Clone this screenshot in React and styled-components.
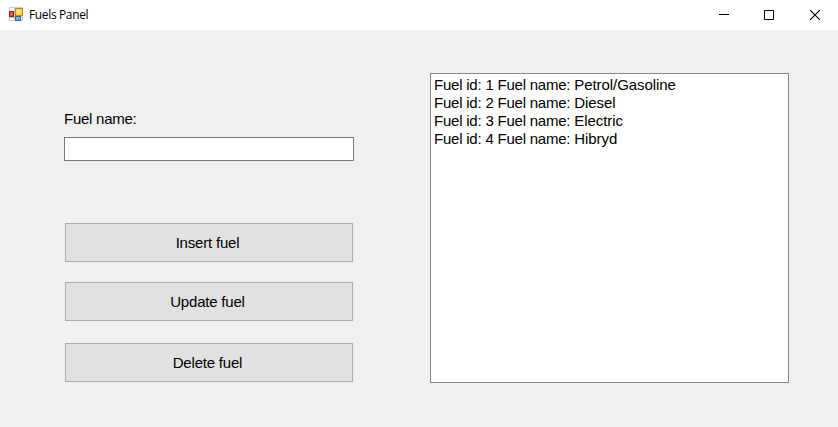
import React from "react";
import styled, { createGlobalStyle } from "styled-components";

const GlobalStyle = createGlobalStyle`
  * { box-sizing: border-box; }
  body { margin: 0; background: #f0f0f0; overflow: hidden; }
`;

const Window = styled.div`
  width: 838px;
  height: 427px;
  display: flex;
  flex-direction: column;
  background: #f0f0f0;
  color: #000;
  font-family: "Liberation Sans", Arial, sans-serif;
  font-size: 15px;
  letter-spacing: -0.155px;
`;

const TitleBar = styled.header`
  display: flex;
  align-items: center;
  height: 30px;
  padding-left: 8px;
  background: #fff;
`;

const Title = styled.h1`
  flex: 1;
  margin: 0 0 0 5px;
  font: 400 12px/16px "Open Sans", "Noto Sans", sans-serif;
  letter-spacing: -0.36px;
`;

const WindowControl = styled.button`
  display: grid;
  place-items: center;
  width: ${(p) => p.$width || 46}px;
  height: 30px;
  padding: 0;
  border: 0;
  background: transparent;
`;

const Content = styled.main`
  flex: 1;
  display: flex;
  align-items: flex-start;
  padding: 43px 49px 0 64px;
`;

const Form = styled.form`
  display: flex;
  flex-direction: column;
  width: 290px;
  margin-right: 76px;
  padding-top: 37px;
`;

const Label = styled.label`
  height: 18px;
  margin-bottom: 9px;
  line-height: 18px;
  letter-spacing: -0.25px;
`;

const TextInput = styled.input`
  height: 24px;
  margin-bottom: 62px;
  padding: 2px 4px;
  border: 1px solid #7a7a7a;
  background: #fff;
  font: inherit;
`;

const Button = styled.button`
  height: 39px;
  margin: 0 1px ${(p) => p.$gap || 0}px;
  padding: 0 3px 0 0;
  border: 1px solid #adadad;
  background: #e1e1e1;
  color: #000;
  font: inherit;
  line-height: 37px;
  letter-spacing: -0.2px;
`;

const ListBox = styled.ul`
  flex: 1;
  height: 310px;
  margin: 0;
  padding: 2px 3px;
  border: 1px solid #828790;
  background: #fff;
  list-style: none;
`;

const ListItem = styled.li`
  height: 18px;
  line-height: 18px;
  white-space: nowrap;
`;

const Prefix = styled.span`
  letter-spacing: -0.22px;
`;

const FuelName = styled.span`
  letter-spacing: -0.06px;
`;

const fuels = ["Petrol/Gasoline", "Diesel", "Electric", "Hibryd"];

function FormIcon() {
  return (
    <svg width="16" height="16" viewBox="0 0 16 16" shapeRendering="crispEdges">
      <path d="M1 0h14v14H1z" fill="#c8c8c8" />
      <path d="M2 1h4v3H2zM2 11h4v2H2zM13 10h1v3h-1z" fill="#fff" />
      <path d="M1 4h5v6H1z" fill="#9b1c12" />
      <path d="M2 5h3v4H2z" fill="#cf4a3c" />
      <path d="M3 6h1v2H3z" fill="#ed9d91" />
      <path d="M7 1h8v8H7z" fill="#bd8712" />
      <path d="M8 2h6v6H8z" fill="#ffd34f" />
      <path d="M9 3h3v3H9z" fill="#ffe58b" />
      <path d="M7 9h6v5H7z" fill="#3565b7" />
      <path d="M8 10h4v3H8z" fill="#73a8f4" />
    </svg>
  );
}

export default function App() {
  return (
    <>
      <GlobalStyle />
      <Window>
        <TitleBar>
          <FormIcon />
          <Title>Fuels Panel</Title>
          <WindowControl aria-label="Minimize" $width={44}>
            <svg width="10" height="10" shapeRendering="crispEdges">
              <path d="M0 4h10v1H0z" />
            </svg>
          </WindowControl>
          <WindowControl aria-label="Maximize">
            <svg width="10" height="10">
              <path d="M.5.5h9v9h-9z" fill="none" stroke="#000" />
            </svg>
          </WindowControl>
          <WindowControl aria-label="Close">
            <svg width="10" height="10">
              <path d="M0 0l10 10M10 0L0 10" fill="none" stroke="#000" strokeWidth="1.1" />
            </svg>
          </WindowControl>
        </TitleBar>
        <Content>
          <Form>
            <Label htmlFor="fuel-name">Fuel name:</Label>
            <TextInput id="fuel-name" />
            <Button type="button" $gap={20}>Insert fuel</Button>
            <Button type="button" $gap={22}>Update fuel</Button>
            <Button type="button">Delete fuel</Button>
          </Form>
          <ListBox>
            {fuels.map((name, i) => (
              <ListItem key={name}>
                <Prefix>{`Fuel id: ${i + 1} Fuel name: `}</Prefix>
                <FuelName>{name}</FuelName>
              </ListItem>
            ))}
          </ListBox>
        </Content>
      </Window>
    </>
  );
}
